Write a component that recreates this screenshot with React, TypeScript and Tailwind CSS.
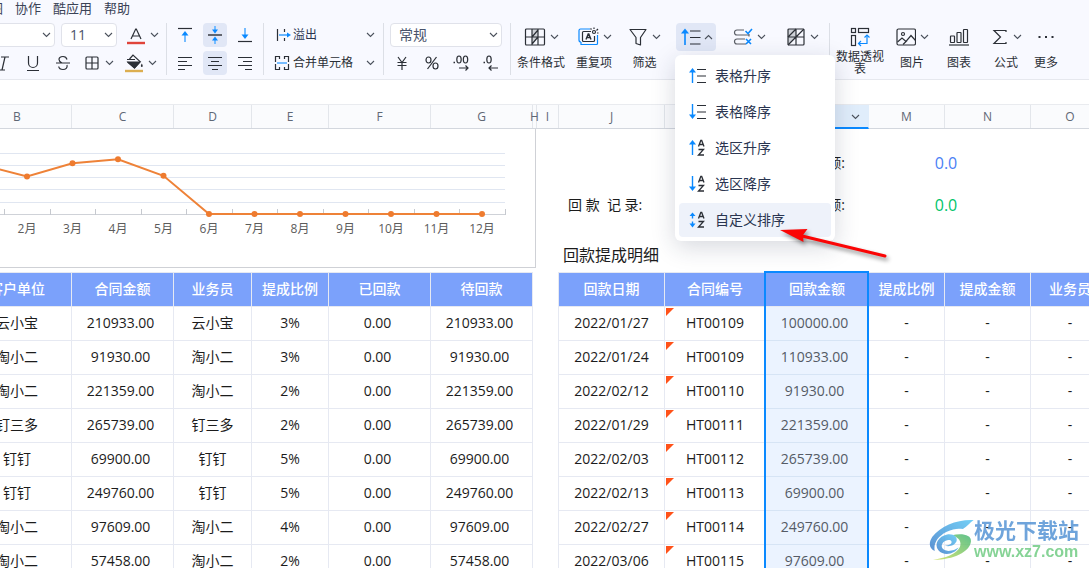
import React from "react";

type IconProps = { children: React.ReactNode; w?: number; h?: number };

// Базовая обёртка для иконок
function Icon({ children, w = 20, h = 20 }: IconProps) {
  return (
    <svg
      width={w}
      height={h}
      viewBox={`0 0 ${w} ${h}`}
      fill="none"
      stroke="#2b2f36"
      strokeWidth="1.2"
      className="shrink-0"
      aria-hidden="true"
    >
      {children}
    </svg>
  );
}

function Chevron({ up = false }: { up?: boolean }) {
  return (
    <svg
      width="9"
      height="6"
      viewBox="0 0 9 6"
      fill="none"
      stroke="#4b515c"
      strokeWidth="1.1"
      className="shrink-0"
      aria-hidden="true"
    >
      <path d={up ? "M1 5 4.5 1.5 8 5" : "M1 1l3.5 3.5L8 1"} />
    </svg>
  );
}

const Divider = () => <div className="w-px h-[52px] bg-[#dcdfe6] shrink-0" />;

function SelectBox({
  label,
  value,
  className,
}: {
  label: string;
  value: string;
  className: string;
}) {
  return (
    <div className={`relative shrink-0 ${className}`}>
      <select
        aria-label={label}
        className="appearance-none w-full h-6 rounded border border-[#e0e2ea] bg-white pl-2 text-[#49536b]"
      >
        <option>{value}</option>
      </select>
      <div className="absolute right-1 top-0 h-6 flex items-center pointer-events-none">
        <Chevron />
      </div>
    </div>
  );
}

function SmallButton({
  label,
  active = false,
  children,
}: {
  label: string;
  active?: boolean;
  children: React.ReactNode;
}) {
  return (
    <button
      aria-label={label}
      className={`w-6 h-6 rounded flex items-center justify-center shrink-0 ${
        active ? "bg-[#e1e7f6]" : ""
      }`}
    >
      {children}
    </button>
  );
}

function BigButton({
  label,
  icon,
  arrow = false,
  width,
  twoLines = false,
}: {
  label: string;
  icon: React.ReactNode;
  arrow?: boolean;
  width: string;
  twoLines?: boolean;
}) {
  return (
    <button className={`flex flex-col items-center shrink-0 h-[52px] ${width}`}>
      <span className="flex items-center gap-1 h-7">
        {icon}
        {arrow && <Chevron />}
      </span>
      <span
        className={
          twoLines
            ? "w-12 text-xs leading-3 text-center break-all"
            : "pt-px text-xs leading-6 whitespace-nowrap"
        }
      >
        {label}
      </span>
    </button>
  );
}

const blue = "#0a89ff";

/* Иконки меню сортировки */
const linesRight = <path d="M9 3.5h9M9 10h9M9 16.5h9" />;

const arrowUp = (
  <>
    <path d="M4.5 17V5" stroke={blue} strokeWidth="1.4" />
    <path d="M1 6.5 4.5 2 8 6.5z" fill={blue} stroke="none" />
  </>
);

const arrowDown = (
  <>
    <path d="M4.5 2v12" stroke={blue} strokeWidth="1.4" />
    <path d="M1 12.5 4.5 17 8 12.5z" fill={blue} stroke="none" />
  </>
);

const arrowBoth = (
  <>
    <path d="M4.5 5v3.5M4.5 11.500v3" stroke={blue} strokeWidth="1.4" />
    <path d="M1.5 6 4.5 2.5 7.5 6zM1.5 13.5 4.5 17.5 7.5 13.5z" fill={blue} stroke="none" />
  </>
);

const az = (
  <path
    d="M10.5 8.500 12.800 2.500h.9L16 8.500M11.500 6.500h3.500M10.500 11.500h5l-5 5.500h5.500"
    strokeWidth="1.3"
  />
);

const menuItems = [
  { title: "表格升序", icon: <>{arrowUp}{linesRight}</> },
  { title: "表格降序", icon: <>{arrowDown}{linesRight}</> },
  { title: "选区升序", icon: <>{arrowUp}{az}</> },
  { title: "选区降序", icon: <>{arrowDown}{az}</> },
  { title: "自定义排序", icon: <>{arrowBoth}{az}</>, active: true },
];

function SortMenu() {
  return (
    <div
      role="menu"
      className="absolute top-8 -left-px z-20 w-40 p-1 flex flex-col gap-0.5 rounded-md bg-white shadow-[0_6px_24px_rgba(30,40,70,0.18)]"
    >
      {menuItems.map((item) => (
        <button
          key={item.title}
          role="menuitem"
          className={`h-[34px] pl-[9px] pr-2 flex items-center gap-[7px] rounded text-sm text-[#2a3550] ${
            item.active ? "bg-[#eef2fa]" : ""
          }`}
        >
          <Icon>{item.icon}</Icon>
          {item.title}
        </button>
      ))}
    </div>
  );
}

function Toolbar() {
  return (
    <header className="bg-[#f8f9ff] border-b border-[#e6e8ee] h-20 shrink-0 text-[#2b2f36]">
      {/* Верхнее меню */}
      <nav className="flex gap-3 -ml-[10px] h-[23px] text-[13px] leading-4 text-[#3a4256]">
        <button className="h-4">图</button>
        <button className="h-4">协作</button>
        <button className="h-4">酷应用</button>
        <button className="h-4">帮助</button>
      </nav>

      <div className="flex">
        {/* Шрифт */}
        <div className="flex flex-col gap-1 w-[166px] shrink-0">
          <div className="flex items-center">
            <SelectBox label="字体" value="" className="w-[115px] -ml-[60px] text-sm" />
            <SelectBox label="字号" value="11" className="w-14 ml-[6px] text-sm" />
            <button aria-label="字体颜色" className="flex items-center gap-1 ml-[9px]">
              <Icon>
                <path d="M5 14 9.7 4h.6L15 14M6.5 11h7" />
                <path d="M1 18h18" stroke="#e0443a" strokeWidth="2.4" />
              </Icon>
              <Chevron />
            </button>
          </div>
          <div className="flex items-center gap-[6px] -ml-[9px] h-6">
            <SmallButton label="斜体">
              <Icon>
                <path d="M8 4h8M4 17h8M12 4 9 17" />
              </Icon>
            </SmallButton>
            <SmallButton label="下划线">
              <Icon>
                <path d="M5.5 3v7a4.5 4.5 0 0 0 9 0V3M4 17.5h12" />
              </Icon>
            </SmallButton>
            <SmallButton label="删除线">
              <Icon>
                <path d="M14 6.5C13.5 4.5 12 3.5 10 3.5c-2.5 0-4 1.4-4 3 0 1.5 1 2.5 3 3.5M3 10h14M14 12c.7 3-1.3 4.5-4 4.5-2.5 0-4-1-4.3-3" />
              </Icon>
            </SmallButton>
            <button aria-label="边框" className="flex items-center gap-1">
              <Icon>
                <rect x="5" y="4" width="12" height="12" rx="1" />
                <path d="M11 4v12M5 10h12" />
              </Icon>
              <Chevron />
            </button>
            <button aria-label="填充颜色" className="flex items-center gap-1 ml-1">
              <Icon>
                <path d="M3 6.5h8M5.500 6 9 2l7 6.500-5.500 6.500L3.500 9" />
                <path d="M4 9h12l-5.5 6z" fill="#2b2f36" />
                <path d="M17.8 10.500c1.500 2.500 1 3.500 0 3.500s-1.500-1 0-3.500z" fill="#2b2f36" stroke="none" />
                <path d="M1 18h18" stroke="#dcae50" strokeWidth="2.4" />
              </Icon>
              <Chevron />
            </button>
          </div>
        </div>
        <Divider />

        {/* Выравнивание */}
        <div className="grid grid-cols-3 gap-x-[6px] gap-y-1 px-[6px] shrink-0">
          <SmallButton label="顶端对齐">
            <Icon>
              <path d="M3 3.5h14" />
              <path d="M10 17V8" stroke="#76bcff" strokeWidth="2" />
              <path d="M6.5 10.5 10 6l3.5 4.5z" fill={blue} stroke="none" />
            </Icon>
          </SmallButton>
          <SmallButton label="垂直居中" active>
            <Icon>
              <path d="M3 10h14" strokeWidth="1.4" />
              <path d="M10 1v4M10 15v4" stroke="#76bcff" strokeWidth="2" />
              <path d="M7 4.5 10 8.5l3-4zM7 15.5 10 11.500l3 4z" fill={blue} stroke="none" />
            </Icon>
          </SmallButton>
          <SmallButton label="底端对齐">
            <Icon>
              <path d="M3 16.5h14" />
              <path d="M10 3v9" stroke="#76bcff" strokeWidth="2" />
              <path d="M6.5 9.500 10 14l3.500-4.500z" fill={blue} stroke="none" />
            </Icon>
          </SmallButton>
          <SmallButton label="左对齐">
            <Icon>
              <path d="M3 4.5h14M3 8.5h9M3 12.5h14M3 16.5h7" />
            </Icon>
          </SmallButton>
          <SmallButton label="居中对齐" active>
            <Icon>
              <path d="M3 4.5h14M6 8.5h8M3 12.5h14M7 16.5h6" />
            </Icon>
          </SmallButton>
          <SmallButton label="右对齐">
            <Icon>
              <path d="M3 4.5h14M8 8.5h9M3 12.5h14M10 16.5h7" />
            </Icon>
          </SmallButton>
        </div>
        <Divider />

        {/* Перенос и объединение ячеек */}
        <div className="flex flex-col gap-1 w-[119px] shrink-0 pl-[9px] pr-2 text-xs">
          <button className="flex items-center h-6 text-[#2a3550]">
            <Icon>
              <path d="M4.5 4v12M11.500 4v3M11.500 13v3" />
              <path d="M6 10h9" stroke={blue} />
              <path d="M14 7.5 18 10l-4 2.500z" fill={blue} stroke="none" />
            </Icon>
            <span>溢出</span>
            <span className="ml-auto">
              <Chevron />
            </span>
          </button>
          <button className="flex items-center h-6 whitespace-nowrap">
            <Icon>
              <path d="M6.5 6V3.5h-4V9M2.5 11v5.500h4V14M11.500 6V3.500h4V9M15.500 11v5.500h-4V14" />
              <path d="M4 10h10" stroke="#76bcff" strokeWidth="2" />
            </Icon>
            <span>合并单元格</span>
            <span className="ml-auto">
              <Chevron />
            </span>
          </button>
        </div>
        <Divider />

        {/* Числовой формат */}
        <div className="flex flex-col gap-1 w-[126px] shrink-0 px-[6px]">
          <SelectBox label="数字格式" value="常规" className="w-28 text-sm" />
          <div className="flex gap-[6px]">
            <SmallButton label="货币">
              <Icon>
                <path d="M6 4l4 5.500L14 4M10 9.500V17M5.500 9.500h9M5.500 12.500h9" />
              </Icon>
            </SmallButton>
            <SmallButton label="百分比">
              <Icon>
                <ellipse cx="6.500" cy="7" rx="2.500" ry="3" />
                <ellipse cx="13.500" cy="13" rx="2.500" ry="3" />
                <path d="M14.500 4 5.500 16" />
              </Icon>
            </SmallButton>
            <SmallButton label="增加小数位">
              <Icon>
                <ellipse cx="7" cy="6.500" rx="2.200" ry="3.500" />
                <ellipse cx="13.500" cy="6.500" rx="2.200" ry="3.500" />
                <path d="M1.500 9.500h1.500" strokeWidth="1.600" />
                <path d="M7 15h9M13.500 12.500 16 15l-2.500 2.500" />
              </Icon>
            </SmallButton>
            <SmallButton label="减少小数位">
              <Icon>
                <ellipse cx="7" cy="6.500" rx="2.200" ry="3.500" />
                <path d="M1.500 9.500h1.500" strokeWidth="1.600" />
                <path d="M16 15H7M9.500 12.500 7 15l2.500 2.500" />
              </Icon>
            </SmallButton>
          </div>
        </div>
        <Divider />

        {/* Данные */}
        <div className="flex shrink-0 w-[318px]">
          <BigButton
            label="条件格式"
            width="w-[60px]"
            arrow
            icon={
              <Icon w={22}>
                <path d="M8 2h6v8l-6 8z" fill="#cfd2d8" stroke="none" />
                <rect x="1.500" y="2" width="19" height="16" rx="1" />
                <path d="M8 2v16M14 2v16M1.500 10h19M14 3 8 10M14 10l-6 7" />
              </Icon>
            }
          />
          <BigButton
            label="重复项"
            width="w-[46px]"
            arrow
            icon={
              <Icon w={22}>
                <path
                  d="M13 2H3.500A1.500 1.500 0 0 0 2 3.500V13c0 1 .5 2 2 2M4 15v2.500h15.500a1 1 0 0 0 1-1V8"
                  stroke={blue}
                />
                <path d="M14 4.500H6.500a1 1 0 0 0-1 1v8a1 1 0 0 0 1 1h10a1 1 0 0 0 1-1V9" />
                <path d="M9 12.500 11.200 7h.6l2.200 5.500M10 10.500h3" strokeWidth="1.400" />
                <circle cx="17" cy="5" r="1.500" />
                <path d="M17 2V.5M19.500 3.500 21 2M14.500 2.500l-1-1M20 6h1.500" />
              </Icon>
            }
          />
          <BigButton
            label="筛选"
            width="w-[55px]"
            arrow
            icon={
              <Icon>
                <path d="M2 2.500h16l-5.500 8V18l-4.500-1.500v-6z" strokeLinejoin="round" />
              </Icon>
            }
          />
          <div className="w-12 shrink-0 flex flex-col items-center">
            <div className="relative w-10">
              <button
                aria-label="排序"
                className="w-10 h-7 rounded bg-[#e1e7f6] flex items-center justify-center gap-0.5"
              >
                <Icon w={22}>
                  <path d="M5 18V5" stroke={blue} strokeWidth="1.600" />
                  <path d="M1 6.500 5 1.500l4 5z" fill={blue} stroke="none" />
                  <path d="M10 4h10.500M10 10.500h10.500M10 17h10.500" />
                </Icon>
                <Chevron up />
              </button>
              <SortMenu />
            </div>
          </div>
          <BigButton
            label=""
            width="w-[58px]"
            arrow
            icon={
              <Icon>
                <path d="M11 3H4a2 2 0 0 0 0 5h12V7M12 12H4a2.500 2.500 0 0 0 0 5h9M16 8v1.500" stroke="#5a5e66" />
                <path
                  d="M12.500 4 15 6.500l4-4.500M13 12l5 5M18 12l-5 5"
                  stroke={blue}
                  strokeWidth="1.600"
                />
              </Icon>
            }
          />
          <BigButton
            label=""
            width="w-12"
            arrow
            icon={
              <Icon>
                <path d="M2 2h8v8H2zM2 10h0v8l8-8z" fill="#cfd2d8" stroke="none" />
                <rect x="2" y="2" width="16" height="16" rx="1" />
                <path d="M10 2v16M2 10h16M10 2 2 10M18 2 2 18" />
              </Icon>
            }
          />
        </div>
        <Divider />

        {/* Вставка */}
        <div className="flex shrink-0 pl-px">
          <BigButton
            label="数据透视表"
            width="w-[58px]"
            twoLines
            icon={
              <Icon>
                <rect x="1.500" y="1.500" width="4" height="4" />
                <rect x="8.500" y="1.500" width="10" height="4" />
                <rect x="1.500" y="8.500" width="4" height="10" />
                <path d="M9 16.500h8V9" stroke={blue} />
                <path d="M14.500 10.500 17 8l2.500 2.500M11 14l-2.500 2.500L11 19" stroke={blue} />
              </Icon>
            }
          />
          <BigButton
            label="图片"
            width="w-[46px]"
            arrow
            icon={
              <Icon>
                <rect x="1" y="2" width="18.500" height="16" rx="1.500" />
                <circle cx="7" cy="7" r="1.500" />
                <path d="M1.500 15 6 11l4 3.500 5-6 4.500 5M7 17.500l4-4" />
              </Icon>
            }
          />
          <BigButton
            label="图表"
            width="w-12"
            icon={
              <Icon w={22}>
                <path d="M1 18h20" />
                <rect x="2.500" y="9" width="4" height="6.500" rx=".5" />
                <rect x="9" y="5.500" width="4" height="10" rx=".5" />
                <rect x="15.500" y="2.500" width="4" height="13" rx=".5" />
              </Icon>
            }
          />
          <BigButton
            label="公式"
            width="w-[46px]"
            arrow
            icon={
              <Icon w={18}>
                <path d="M15 5V3.500H3L9.500 10 3 16.500h12V15" />
              </Icon>
            }
          />
          <BigButton
            label="更多"
            width="w-[34px]"
            icon={
              <Icon>
                <path d="M2.500 10h2M9 10h2M15.500 10h2" strokeWidth="1.800" />
              </Icon>
            }
          />
        </div>
      </div>
    </header>
  );
}

const columns = [
  { name: "B", width: "w-[109px]" },
  { name: "C", width: "w-[102px]" },
  { name: "D", width: "w-[78px]" },
  { name: "E", width: "w-[77px]" },
  { name: "F", width: "w-[102px]" },
  { name: "G", width: "w-[102px]" },
  { name: "H", width: "w-1" },
  { name: "I", width: "w-[22px]" },
  { name: "J", width: "w-[106px]" },
  { name: "K", width: "w-[101px]" },
  { name: "L", width: "w-[103px]", selected: true },
  { name: "M", width: "w-[76px]" },
  { name: "N", width: "w-[86px]" },
  { name: "O", width: "w-[79px]" },
];

function ColumnHeads() {
  return (
    <div className="flex -ml-[37px] h-[25px] shrink-0 bg-[#fafbfd] border-y border-b-[#d3d7de] border-t-[#e9ebef] text-xs text-[#5f6775]">
      {columns.map((col) => (
        <div
          key={col.name}
          className={`shrink-0 border-r flex items-center justify-center ${col.width} ${
            col.selected
              ? "relative -mb-px bg-[#e0edfb] border-[#e0edfb] border-b-2 border-b-[#0a89ff]"
              : "border-[#e3e6eb]"
          }`}
        >
          {col.name}
          {col.selected && (
            <span className="absolute right-2 top-0 h-6 flex items-center">
              <Chevron />
            </span>
          )}
        </div>
      ))}
    </div>
  );
}

// Точки графика по месяцам
const chartPoints = [35.6, 47.5, 34.3, 30.3, 46.8, 85, 85, 85, 85, 85, 85, 85];
const pointX = (i: number) => 18.5 + i * 45.5;

function MonthChart() {
  return (
    <svg
      width="572"
      height="138"
      viewBox="0 0 572 138"
      role="img"
      aria-label="月度回款"
      className="block"
    >
      {[24.5, 36.5, 48.5, 60.5, 73.5].map((y) => (
        <path key={y} d={`M0 ${y}H542`} stroke="#e0e6f1" />
      ))}
      <path d="M0 85.5H542.5" stroke="#cfd2d8" />
      {chartPoints.map((_, i) => (
        <path key={i} d={`M${Math.round(41 + i * 45.5) + 0.5} 80v6`} stroke="#c6c9cf" />
      ))}
      <polyline
        points={chartPoints.map((y, i) => `${pointX(i)},${y}`).join(" ")}
        fill="none"
        stroke="#ee8238"
        strokeWidth="2"
      />
      {chartPoints.map((y, i) => (
        <circle key={i} cx={pointX(i)} cy={y} r="3" fill="#ee7b2f" />
      ))}
      {chartPoints.map((_, i) => (
        <text
          key={i}
          x={pointX(i)}
          y="104"
          textAnchor="middle"
          fontSize="12"
          fill="#5c5c5c"
        >
          {i + 1}月
        </text>
      ))}
    </svg>
  );
}

const contracts = [
  ["云小宝", "210933.00", "云小宝", "3%", "0.00", "210933.00"],
  ["淘小二", "91930.00", "淘小二", "3%", "0.00", "91930.00"],
  ["淘小二", "221359.00", "淘小二", "2%", "0.00", "221359.00"],
  ["钉三多", "265739.00", "钉三多", "2%", "0.00", "265739.00"],
  ["钉钉", "69900.00", "钉钉", "5%", "0.00", "69900.00"],
  ["钉钉", "249760.00", "钉钉", "5%", "0.00", "249760.00"],
  ["淘小二", "97609.00", "淘小二", "4%", "0.00", "97609.00"],
  ["淘小二", "57458.00", "淘小二", "2%", "0.00", "57458.00"],
];

const payments = [
  ["2022/01/27", "HT00109", "100000.00"],
  ["2022/01/24", "HT00109", "110933.00"],
  ["2022/02/12", "HT00110", "91930.00"],
  ["2022/01/29", "HT00111", "221359.00"],
  ["2022/02/03", "HT00112", "265739.00"],
  ["2022/02/13", "HT00113", "69900.00"],
  ["2022/02/27", "HT00114", "249760.00"],
  ["2022/03/06", "HT00115", "97609.00"],
];

const headCell =
  "h-[34px] pb-0.5 bg-[#7ba1fb] border-r border-b border-[#e6e9f2] text-white font-medium whitespace-nowrap";
const bodyCell = "h-[34px] pb-0.5 border-r border-b border-[#e6e9f2] text-center";

function ContractTable() {
  return (
    <table className="table-fixed border-separate border-spacing-0 w-[570px] border-t border-[#e6e9f2] text-sm text-[#1c1c1c]">
      <colgroup>
        <col className="w-[109px]" />
        <col className="w-[102px]" />
        <col className="w-[78px]" />
        <col className="w-[77px]" />
        <col className="w-[102px]" />
        <col className="w-[102px]" />
      </colgroup>
      <thead>
        <tr>
          {["客户单位", "合同金额", "业务员", "提成比例", "已回款", "待回款"].map((t) => (
            <th key={t} className={headCell}>
              {t}
            </th>
          ))}
        </tr>
      </thead>
      <tbody>
        {contracts.map((row, i) => (
          <tr key={i}>
            {row.map((cell, j) => (
              <td key={j} className={`${bodyCell} ${cell.includes(".") ? "pr-1" : ""}`}>
                {cell}
              </td>
            ))}
          </tr>
        ))}
      </tbody>
    </table>
  );
}

function PaymentTable() {
  return (
    <table className="table-fixed border-separate border-spacing-0 w-[552px] border-t border-l border-[#e6e9f2] text-sm text-[#1c1c1c]">
      <colgroup>
        <col className="w-[106px]" />
        <col className="w-[101px]" />
        <col className="w-[103px]" />
        <col className="w-[76px]" />
        <col className="w-[86px]" />
        <col className="w-[79px]" />
      </colgroup>
      <thead>
        <tr>
          {["回款日期", "合同编号", "回款金额", "提成比例", "提成金额", "业务员"].map((t) => (
            <th key={t} className={headCell}>
              {t}
            </th>
          ))}
        </tr>
      </thead>
      <tbody>
        {payments.map(([date, code, sum]) => (
          <tr key={code + date}>
            <td className={bodyCell}>{date}</td>
            <td className={`${bodyCell} relative`}>
              <span className="absolute top-px left-px border-t-8 border-t-[#ff5219] border-r-8 border-r-transparent" />
              {code}
            </td>
            <td className="h-[34px] pb-0.5 pr-1.5 border-b border-[#d6e4f5] bg-[#ebf3ff] text-center text-[#555b66]">
              {sum}
            </td>
            <td className={bodyCell}>-</td>
            <td className={bodyCell}>-</td>
            <td className={bodyCell}>-</td>
          </tr>
        ))}
      </tbody>
    </table>
  );
}

function Watermark() {
  return (
    <div className="absolute right-[10px] bottom-[5px] z-10 flex items-start opacity-85">
      <svg width="45" height="41" viewBox="118 112 134 122" aria-hidden="true">
        <defs>
          <linearGradient id="wmBlue" x1="0" y1="1" x2="1" y2="0">
            <stop offset="0" stopColor="#3f7fcb" />
            <stop offset="1" stopColor="#5cc8f5" />
          </linearGradient>
          <linearGradient id="wmGreen" x1="0" y1="1" x2="1" y2="0">
            <stop offset="0" stopColor="#cfe05e" />
            <stop offset="1" stopColor="#45b878" />
          </linearGradient>
        </defs>
        <path
          d="M251 115C205 112 152 132 128 165c-12 18-10 35 7 42-4-22 8-43 36-57 18-9 35-11 48-8 12-8 20-18 32-27z"
          fill="url(#wmBlue)"
        />
        <path
          d="M186 160c30-6 58-2 57 18-3 33-55 56-113 55 36-5 70-16 80-38 6-16-3-29-24-35z"
          fill="url(#wmGreen)"
        />
        <path
          d="M146 205c-14-18 0-42 26-47 20-3 32 9 28 20-5 12-22 18-35 13 14 0 22-6 20-12-3-7-18-5-25 3-9 11-3 24 16 25 12 0 22-4 30-10-9 19-44 27-60 8z"
          fill="url(#wmBlue)"
        />
      </svg>
      <div className="flex flex-col">
        <span className="text-[21px] leading-[22px] font-bold text-[#5695d5]">极光下载站</span>
        <span className="font-['Liberation_Sans'] text-base leading-[22px] font-bold text-[#72cc84]">
          www.xz7.com
        </span>
      </div>
    </div>
  );
}

function PointerArrow() {
  return (
    <svg
      width="120"
      height="44"
      viewBox="0 0 120 44"
      className="absolute left-[776px] top-[224px] z-30 pointer-events-none drop-shadow-[2px_3px_2px_rgba(0,0,0,0.45)]"
      aria-hidden="true"
    >
      <path d="M24 11.5 109 32" stroke="#fb0505" strokeWidth="3" strokeLinecap="round" />
      <path d="M4 6 31.500 5 27 11 27.500 18z" fill="#fb0505" />
    </svg>
  );
}

function App() {
  return (
    <div className="relative h-screen w-full overflow-hidden flex flex-col bg-white font-['Open_Sans','Noto_Sans_CJK_SC',sans-serif]">
      <Toolbar />
      {/* Строка формул */}
      <div className="h-6 shrink-0 bg-white" />
      <ColumnHeads />

      <main className="flex flex-1 min-h-0 -ml-[37px]">
        {/* График и договоры */}
        <section className="w-[573px] shrink-0">
          <div className="mb-1 border-r border-b border-[#cfd1d6]">
            <MonthChart />
          </div>
          <ContractTable />
        </section>

        {/* Платежи */}
        <section className="ml-[22px] shrink-0">
          <div className="pt-[13px] text-sm text-[#1c1c1c]">
            <div className="flex items-center h-[42px]">
              <span className="w-[287px] text-right">额:</span>
              <span className="w-[202px] text-center text-base text-[#4a80f5]">0.0</span>
            </div>
            <div className="flex items-center h-[42px]">
              <span className="w-[107px] pl-[10px] whitespace-pre">回 款  记 录:</span>
              <span className="w-[180px] text-right">额:</span>
              <span className="w-[202px] text-center text-base text-[#00c46a]">0.0</span>
            </div>
          </div>
          <h2 className="mt-[14px] h-8 pb-0.5 pl-[5px] flex items-center text-base text-[#1c1c1c]">
            回款提成明细
          </h2>
          <div className="relative">
            <PaymentTable />
            {/* Рамка выделенного столбца */}
            <div className="absolute -top-px bottom-0 left-[206px] w-[105px] border-2 border-[#0a89ff] pointer-events-none" />
          </div>
        </section>
      </main>

      <PointerArrow />
      <Watermark />
    </div>
  );
}

export default App;
